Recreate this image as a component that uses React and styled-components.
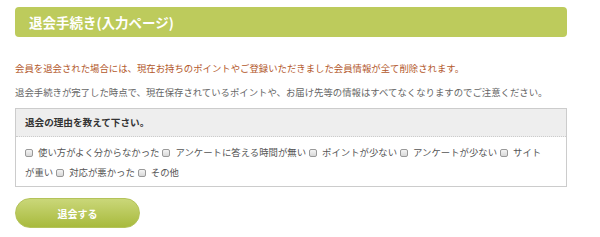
import React from 'react';
import styled, { createGlobalStyle } from 'styled-components';

const GlobalStyle = createGlobalStyle`
    body {
        margin: 0;
        background: #fff;
        font-family: "Noto Sans CJK JP", "Noto Sans", sans-serif;
    }
`;

const reasons = [
    '使い方がよく分からなかった',
    'アンケートに答える時間が無い',
    'ポイントが少ない',
    'アンケートが少ない',
    'サイトが重い',
    '対応が悪かった',
    'その他',
];

export default function App() {
    return (
        <Page>
            <GlobalStyle />
            <TitleBar>退会手続き(入力ページ)</TitleBar>

            <Notice $warn>会員を退会された場合には、現在お持ちのポイントやご登録いただきました会員情報が全て削除されます。</Notice>
            <Notice>退会手続きが完了した時点で、現在保存されているポイントや、お届け先等の情報はすべてなくなりますのでご注意ください。</Notice>

            <ReasonBox>
                <ReasonHead>退会の理由を教えて下さい。</ReasonHead>
                <ReasonList>
                    {reasons.map((r, i) => (
                        <Reason key={i}>
                            <Check type='checkbox' id={'reason-' + i} />
                            <label htmlFor={'reason-' + i}>{r}</label>
                        </Reason>
                    ))}
                </ReasonList>
            </ReasonBox>

            <SubmitButton type='button'>退会する</SubmitButton>
        </Page>
    );
}

const Page = styled.div`
    width: 552px;
    padding: 7px 15px 8px;
    display: flex;
    flex-direction: column;
    align-items: flex-start;
`;

const TitleBar = styled.h2`
    margin: 0;
    align-self: stretch;
    height: 30px;
    line-height: 30px;
    padding: 0 14px;
    background: #bdcb5c;
    border-radius: 4px;
    color: #fff;
    font-size: 13.5px;
    font-weight: bold;
`;

const Notice = styled.p`
    margin: ${p => (p.$warn ? '24px' : '10px')} 0 0;
    font-size: 9.4px;
    line-height: 14px;
    color: ${p => (p.$warn ? '#b3582b' : '#666')};
    white-space: nowrap;
`;

const ReasonBox = styled.div`
    margin-top: 9px;
    align-self: stretch;
    border: 1px solid #ccc;
`;

const ReasonHead = styled.div`
    height: 27px;
    line-height: 27px;
    padding: 0 9px;
    background: #eee;
    border-bottom: 1px dotted #ccc;
    font-size: 9.6px;
    font-weight: bold;
    color: #333;
`;

const ReasonList = styled.div`
    padding: 5px 16px 4px 9px;
    font-size: 9.4px;
    line-height: 20px;
    color: #555;
`;

const Reason = styled.span`
    label {
        margin-left: 5px;
        margin-right: 3px;
    }
`;

const Check = styled.input`
    appearance: none;
    width: 8px;
    height: 8px;
    margin: 0;
    vertical-align: -1px;
    border: 1px solid #999;
    border-radius: 2px;
    background: linear-gradient(#f4f4f4, #d8d8d8);
`;

const SubmitButton = styled.button`
    margin-top: 11px;
    width: 125px;
    height: 30px;
    border: 1px solid #b4c35a;
    border-radius: 15px;
    background: linear-gradient(#cad779, #a8ba3d);
    color: #fff;
    font-family: inherit;
    font-size: 10px;
    font-weight: bold;
    cursor: pointer;
`;
